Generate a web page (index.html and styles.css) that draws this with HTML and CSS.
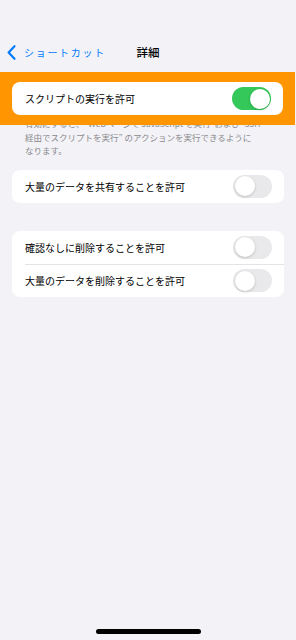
FILE: index.html
```html
<!DOCTYPE html>
<html lang="ja">
<head>
    <meta charset="UTF-8">
    <meta name="viewport" content="width=device-width, initial-scale=1.0">
    <title>詳細</title>
    <link rel="stylesheet" href="styles.css">
</head>
<body>
    <div class="screen">
        <!-- navigation bar -->
        <div class="nav">
            <a class="back" href="#">
                <svg class="chevron" width="9" height="15" viewBox="0 0 9 15">
                    <path d="M7.5 1.2 L1.6 7.5 L7.5 13.8" fill="none" stroke="#007aff" stroke-width="2.1" stroke-linecap="round" stroke-linejoin="round"/>
                </svg>
                <span class="back-label">ショートカット</span>
            </a>
            <div class="title">詳細</div>
            <div></div>
        </div>

        <!-- highlighted setting -->
        <div class="highlight">
            <div class="card">
                <div class="row">
                    <span class="label">スクリプトの実行を許可</span>
                    <span class="switch on"></span>
                </div>
            </div>
        </div>
        <p class="footnote">有効にすると、“Webページで JavaScript を実行”および“SSH<br>経由でスクリプトを実行” のアクションを実行できるように<br>なります。</p>

        <div class="card group">
            <div class="row">
                <span class="label">大量のデータを共有することを許可</span>
                <span class="switch"></span>
            </div>
        </div>

        <div class="card group">
            <div class="row">
                <span class="label">確認なしに削除することを許可</span>
                <span class="switch"></span>
            </div>
            <div class="row divided">
                <span class="label">大量のデータを削除することを許可</span>
                <span class="switch"></span>
            </div>
        </div>

        <div class="home-bar"></div>
    </div>
</body>
</html>
```

FILE: styles.css
```css
body {
    margin: 0;
    padding: 0;
    background-color: #f2f2f7;
    font-family: "Noto Sans CJK JP", "Noto Sans", sans-serif;
    color: #000;
}
.screen {
    min-height: 640px;
    display: flex;
    flex-direction: column;
}
.nav {
    margin-top: 40px;
    height: 24px;
    display: grid;
    grid-template-columns: 1fr auto 1fr;
    align-items: center;
}
.back {
    display: flex;
    align-items: center;
    padding-left: 7px;
    color: #007aff;
    text-decoration: none;
}
.back-label {
    margin-left: 8px;
    font-size: 10px;
    letter-spacing: 1.7px;
}
.title {
    font-size: 11.5px;
    font-weight: 500;
}
.highlight {
    margin-top: 8px;
    margin-right: 1px;
    padding: 10px 12px 10px 12px;
    background: #ff9500;
    position: relative;
    z-index: 1;
}
.card {
    background: #fff;
    border-radius: 8px;
}
.group {
    margin: 0 12px;
}
.row {
    height: 33px;
    box-sizing: border-box;
    display: flex;
    align-items: center;
    justify-content: space-between;
    padding: 0 12px 0 13px;
}
.divided {
    border-top: 1px solid #e4e4e8;
    margin-left: 13px;
    padding-left: 0;
}
.label {
    font-size: 10px;
}
.switch {
    width: 39px;
    height: 23px;
    border-radius: 12px;
    background: #e9e9eb;
    position: relative;
}
.switch::after {
    content: "";
    position: absolute;
    top: 1.5px;
    left: 1.5px;
    width: 20px;
    height: 20px;
    border-radius: 50%;
    background: #fff;
    box-shadow: 0 1px 3px rgba(0, 0, 0, 0.18);
}
.switch.on {
    background: #34c759;
}
.switch.on::after {
    left: 17.5px;
}
.footnote {
    margin: -8px 0 0 0;
    padding: 0 12px 0 25px;
    font-size: 8.5px;
    line-height: 13.5px;
    color: #8a8a8e;
    white-space: nowrap;
}
.footnote + .group {
    margin-top: 12px;
}
.group + .group {
    margin-top: 28px;
}
.home-bar {
    margin: auto auto 6px auto;
    width: 105px;
    height: 5px;
    border-radius: 3px;
    background: #000;
}
```
